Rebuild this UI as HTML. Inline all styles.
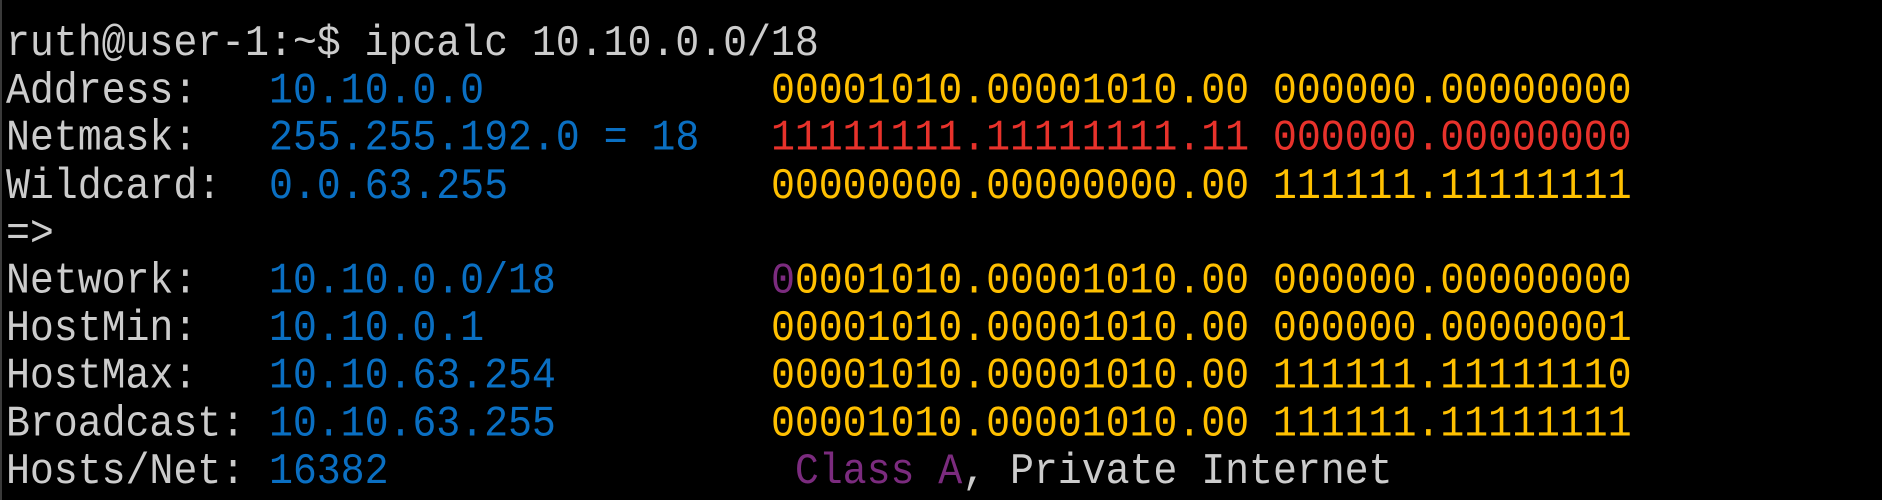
<!DOCTYPE html>
<html><head><meta charset="utf-8"><style>
html,body{margin:0;padding:0;background:#000;width:1882px;height:500px;overflow:hidden}
.l{position:absolute;left:0;top:0;width:2px;height:500px;background:#3a3a3a}
pre{position:absolute;left:6px;top:21px;margin:0;font-family:"Liberation Mono",monospace;font-size:40px;line-height:43.2px;color:#cccccc;transform:scaleY(1.1);transform-origin:0 0;letter-spacing:-0.1px}
.b{color:#0a6fc2}.y{color:#ffc000}.r{color:#e8322b}.p{color:#7b2b7e}.w{color:#cccccc}
</style></head><body><div class="l"></div>
<pre>ruth@user-1:~$ ipcalc 10.10.0.0/18
Address:   <span class="b">10.10.0.0</span>            <span class="y">00001010.00001010.00 000000.00000000</span>
Netmask:   <span class="b">255.255.192.0 = 18</span>   <span class="r">11111111.11111111.11 000000.00000000</span>
Wildcard:  <span class="b">0.0.63.255</span>           <span class="y">00000000.00000000.00 111111.11111111</span>
=&gt;
Network:   <span class="b">10.10.0.0/18</span>         <span class="p">0</span><span class="y">0001010.00001010.00 000000.00000000</span>
HostMin:   <span class="b">10.10.0.1</span>            <span class="y">00001010.00001010.00 000000.00000001</span>
HostMax:   <span class="b">10.10.63.254</span>         <span class="y">00001010.00001010.00 111111.11111110</span>
Broadcast: <span class="b">10.10.63.255</span>         <span class="y">00001010.00001010.00 111111.11111111</span>
Hosts/Net: <span class="b">16382</span>                 <span class="p">Class A</span>, Private Internet</pre>
</body></html>
